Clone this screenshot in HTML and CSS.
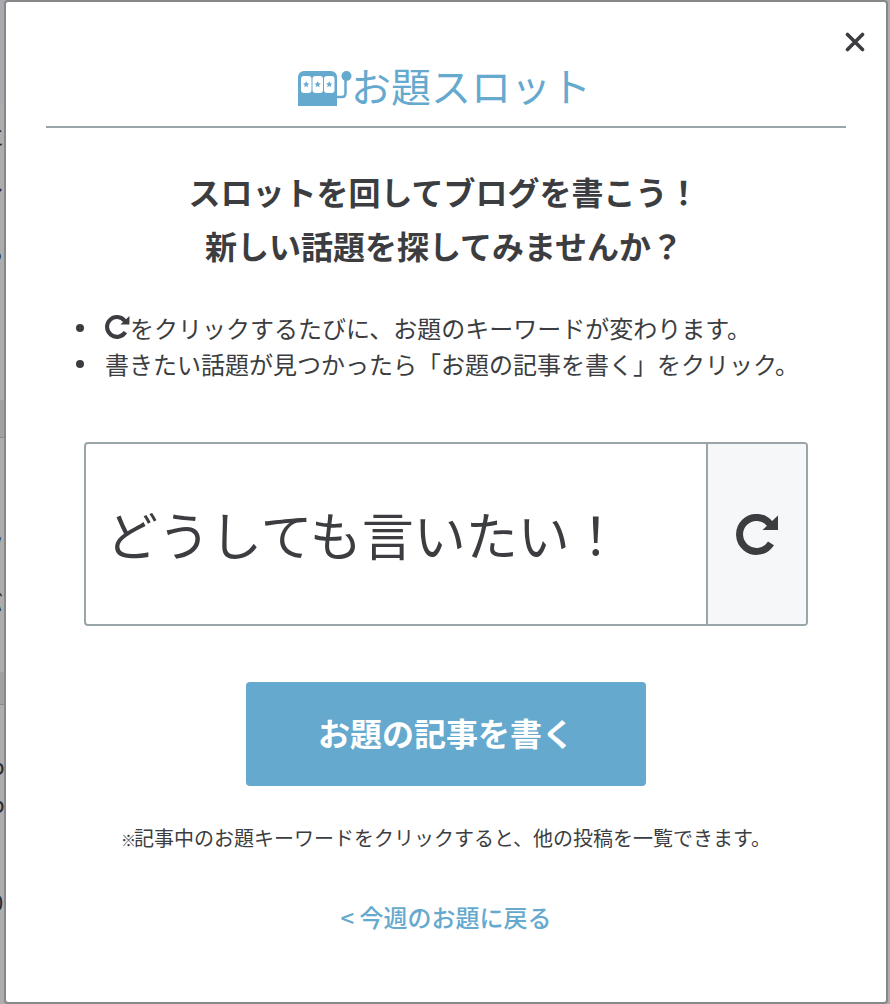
FILE: index.html
```html
<!DOCTYPE html>
<html lang="ja">
<head>
<meta charset="utf-8">
<title>お題スロット</title>
<link rel="stylesheet" href="styles.css">
</head>
<body>
<div class="backdrop">
  <i class="band band-a"></i>
  <i class="band band-b"></i>
  <i class="band band-c"></i>
  <span class="frag frag-1">に</span>
  <span class="frag frag-2">し</span>
  <span class="frag frag-3">ら</span>
  <span class="frag frag-4">フ</span>
  <span class="frag frag-5">バ</span>
  <span class="frag frag-6">b</span>
  <span class="frag frag-7">b</span>
  <span class="frag frag-8">0</span>
</div>
<main class="modal">
  <button class="close" aria-label="閉じる">
    <svg viewBox="0 0 20 20" width="20" height="20"><path d="M2.5 2.5l15 15M17.500 2.500l-15 15" fill="none" stroke="#3c3d40" stroke-width="3.600" stroke-linecap="round"/></svg>
  </button>
  <header class="title">
    <svg class="slot-icon" viewBox="0 0 54 36" width="54" height="36">
      <path d="M0 36V7a6 6 0 0 1 6-6h27a6 6 0 0 1 6 6v29z" fill="#66a9ce"/>
      <rect x="3" y="6" width="10.500" height="17" rx="3" fill="#fff"/>
      <rect x="14.500" y="6" width="10.500" height="17" rx="3" fill="#fff"/>
      <rect x="26" y="6" width="10.500" height="17" rx="3" fill="#fff"/>
      <path d="M8.200 11l.9 2.200 2.300.2-1.800 1.500.6 2.300-2-1.200-2 1.200.6-2.300-1.800-1.500 2.300-.2z" fill="#66a9ce"/>
      <path d="M19.700 11l.9 2.200 2.300.2-1.800 1.500.6 2.300-2-1.200-2 1.200.6-2.300-1.800-1.500 2.300-.2z" fill="#66a9ce"/>
      <path d="M31.200 11l.9 2.200 2.300.2-1.800 1.500.6 2.300-2-1.200-2 1.200.6-2.300-1.800-1.500 2.300-.2z" fill="#66a9ce"/>
      <circle cx="48.500" cy="6" r="5" fill="#66a9ce"/>
      <path d="M47.500 10v13q0 4-3.500 4h-5" fill="none" stroke="#66a9ce" stroke-width="2.500"/>
    </svg>
    <h1>お題スロット</h1>
  </header>
  <h2 class="lead">スロットを回してブログを書こう！<br>新しい話題を探してみませんか？</h2>
  <ul class="notes">
    <li><svg class="reload-small" viewBox="0 0 43 41" width="25" height="24"><path d="M34 10A17 17 0 1 0 35 29.400" fill="none" stroke="#3c3d40" stroke-width="7"/><path d="M42 1.500V16H26.500z" fill="#3c3d40"/></svg><span>をクリックするたびに、お題のキーワードが変わります。</span></li>
    <li><span>書きたい話題が見つかったら「お題の記事を書く」をクリック。</span></li>
  </ul>
  <section class="slot">
    <p class="keyword">どうしても言いたい！</p>
    <button class="reload" aria-label="更新">
      <svg viewBox="0 0 43 41" width="43" height="41"><path d="M34 10A17 17 0 1 0 35 29.400" fill="none" stroke="#3c3d40" stroke-width="7"/><path d="M42 1.500V16H26.500z" fill="#3c3d40"/></svg>
    </button>
  </section>
  <a class="write" href="#">お題の記事を書く</a>
  <p class="hint"><span class="mark">※</span>記事中のお題キーワードをクリックすると、他の投稿を一覧できます。</p>
  <a class="back" href="#">&lt; 今週のお題に戻る</a>
</main>
</body>
</html>
```

FILE: styles.css
```css
* { box-sizing: border-box; }
html, body { margin: 0; height: 100%; }
body {
  width: 890px;
  height: 1004px;
  overflow: hidden;
  background: #adadad;
  color: #3c3d40;
  font-family: "Noto Sans CJK JP", "Noto Sans", sans-serif;
  position: relative;
}
.backdrop { position: absolute; inset: 0; overflow: hidden; }
.band { position: absolute; left: 0; width: 5px; background: #a3a3a3; }
.band-a { top: 0; height: 104px; background: #a9abaf; }
.band-b { top: 400px; height: 38px; background: #a0a0a0; border-bottom: 1px solid #888; }
.band-c { top: 672px; height: 33px; background: #a0a0a0; border-bottom: 1px solid #888; }
.frag { position: absolute; font-size: 22px; line-height: 26px; color: #2a2a2e; }
.frag-1 { top: 122px; left: -18px; }
.frag-2 { top: 170px; left: -18px; }
.frag-3 { top: 238px; left: -18px; }
.frag-4 { top: 529px; left: -18px; }
.frag-5 { top: 588px; left: -19px; }
.frag-6 { top: 752px; left: -9px; }
.frag-7 { top: 790px; left: -9px; }
.frag-8 { top: 888px; left: -9px; }

.modal {
  position: absolute;
  left: 4px;
  top: 0;
  width: 884px;
  height: 1004px;
  background: #fff;
  border: 2px solid #878787;
  border-radius: 4px;
  padding: 0 40px;
  display: flex;
  flex-direction: column;
  align-items: center;
}
.close {
  position: absolute;
  top: 30px;
  right: 21px;
  width: 20px;
  height: 20px;
  padding: 0;
  border: 0;
  background: none;
  display: flex;
}
.title {
  width: 800px;
  height: 126px;
  border-bottom: 2px solid #9aa5a9;
  display: flex;
  justify-content: center;
  align-items: flex-start;
  gap: 2px;
  padding-top: 68px;
  flex: none;
}
.slot-icon { flex: none; }
h1 {
  margin: -11px 3px 0 -3px;
  font-size: 40px;
  line-height: 52px;
  font-weight: 400;
  color: #66a9ce;
  white-space: nowrap;
}
.lead {
  margin: 36px 4px 0 0;
  font-size: 32px;
  line-height: 54px;
  font-weight: 700;
  text-align: center;
  white-space: nowrap;
}
.notes {
  align-self: flex-start;
  list-style: none;
  margin: 38px 0 0;
  padding: 0 0 0 30px;
  font-size: 24px;
  line-height: 36px;
  white-space: nowrap;
}
.notes li { display: flex; align-items: center; }
.notes li::before {
  content: "";
  flex: none;
  width: 8px;
  height: 8px;
  margin-right: 21px;
  border-radius: 50%;
  background: #3c3d40;
}
.reload-small { flex: none; margin-top: -3px; }
.slot {
  margin-top: 60px;
  width: 724px;
  height: 184px;
  flex: none;
  border: 2px solid #9aa5a9;
  border-radius: 4px;
  display: flex;
  overflow: hidden;
}
.keyword {
  flex: 1;
  margin: 0;
  padding-left: 20px;
  font-size: 52px;
  line-height: 180px;
  white-space: nowrap;
}
.reload {
  width: 100px;
  flex: none;
  border: 0;
  border-left: 2px solid #9aa5a9;
  background: #f6f7f9;
  padding: 0;
  display: flex;
  align-items: center;
  justify-content: center;
}
.write {
  margin-top: 56px;
  width: 400px;
  height: 104px;
  flex: none;
  background: #66a9ce;
  border-radius: 4px;
  color: #fff;
  font-size: 32px;
  font-weight: 700;
  text-decoration: none;
  display: flex;
  align-items: center;
  justify-content: center;
  padding-bottom: 4px;
}
.hint {
  margin: 36px 0 0;
  font-size: 20px;
  line-height: 32px;
  white-space: nowrap;
}
.mark { font-size: 15px; font-weight: 700; letter-spacing: -2px; }
.back {
  margin-top: 45px;
  font-size: 24px;
  line-height: 32px;
  font-weight: 500;
  color: #66a9ce;
  text-decoration: none;
  white-space: nowrap;
}
```
